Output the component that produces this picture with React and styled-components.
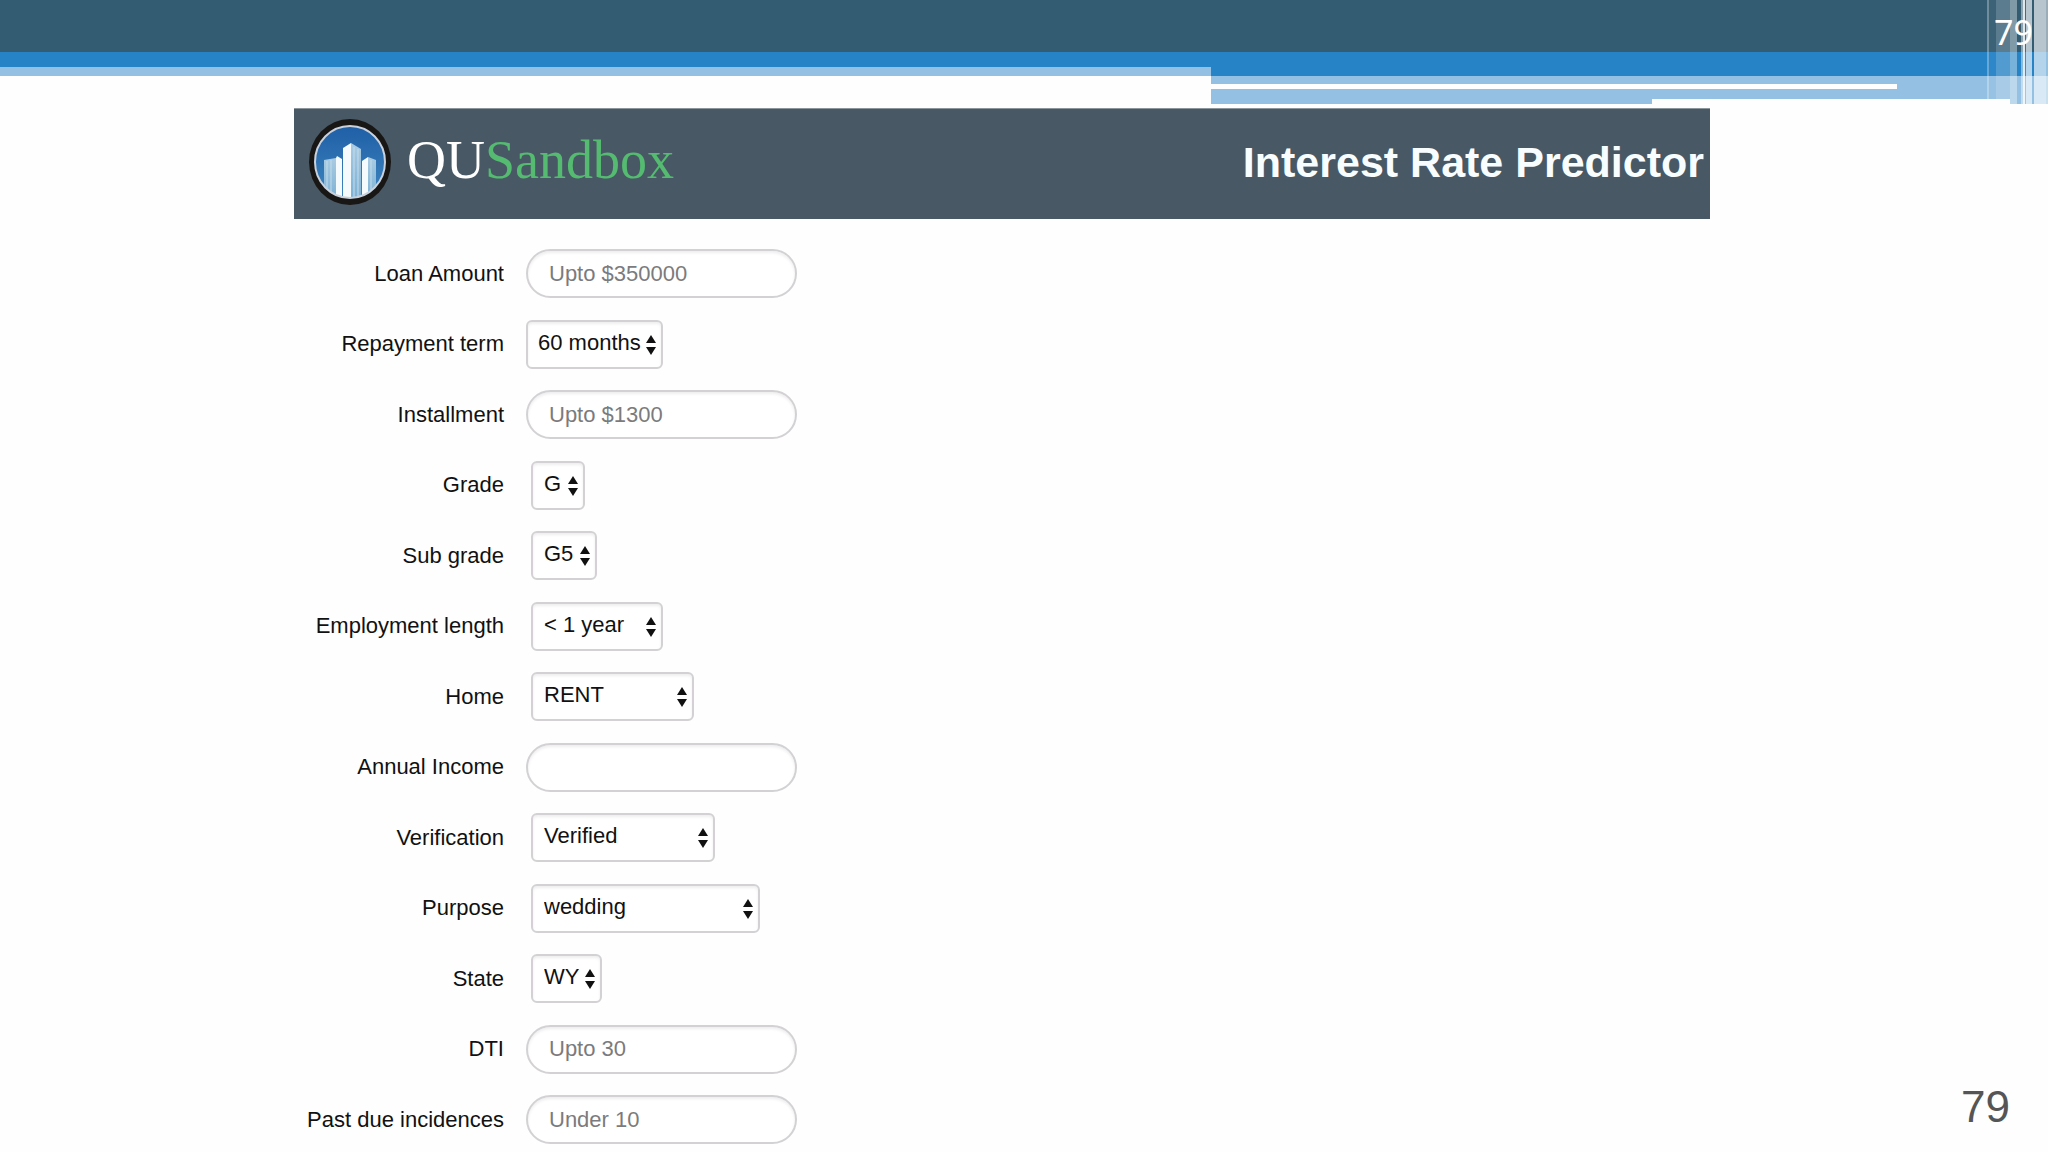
import { useId } from 'react';
import styled, { createGlobalStyle } from 'styled-components';

const GlobalStyle = createGlobalStyle`
    * {
        box-sizing: border-box;
    }

    body {
        margin: 0;
        background: #fefefe;
        color: #111;
        font-family: "Liberation Sans", Arial, sans-serif;
        font-size: 22px;
    }
`

const Slide = styled.div`
    min-height: 100vh;
    display: flex;
    flex-direction: column;
`

const Banner = styled.div`
    position: relative;
    height: 104px;
    margin-bottom: 4px;
    flex-shrink: 0;
`

const Band = styled.div`
    height: ${ props => props.$height }px;
    background: ${ props => props.$colour };
`

const Split = styled.div`
    display: flex;
    align-items: flex-start;
`

const SplitLeft = styled.div`
    flex: 1211 1 0;
`

const SplitRight = styled.div`
    flex: 837 1 0;
`

const Rule = styled.div`
    height: 5px;
    margin-right: 151px;
    background: #fefefe;
`

const LightBand = styled.div`
    background: #93c0e3;
`

const Steps = styled.div`
    display: flex;
    justify-content: space-between;
`

const Step = styled.div`
    width: ${ props => props.$width };
    height: 5px;
    background: #93c0e3;
`

const Stripes = styled.div`
    position: absolute;
    top: 0;
    right: 0;
    height: 104px;
    display: flex;
`

const Stripe = styled.div`
    width: ${ props => props.$width }px;
    height: ${ props => props.$short ? 99 : 104 }px;
    background: rgba(255, 255, 255, ${ props => props.$alpha });
`

const BannerNumber = styled.span`
    position: absolute;
    top: 9px;
    right: 15px;
    color: #fff;
    font-family: "Noto Sans", sans-serif;
    font-size: 34px;
    line-height: 46px;
`

const TitleBar = styled.header`
    height: 111px;
    margin: 0 338px 0 294px;
    padding: 0 6px 4px 14px;
    background: #485965;
    border-top: 1px solid #8b959c;
    display: flex;
    align-items: center;
    flex-shrink: 0;
`

const Brand = styled.div`
    display: flex;
    align-items: center;
    gap: 15px;
    color: #fff;
    font-family: "Liberation Serif", serif;
    font-size: 54px;
    line-height: 64px;
`

const BrandAccent = styled.span`
    color: #54bb70;
`

const BrandName = styled.span`
    padding-bottom: 4px;
`

const Title = styled.h1`
    margin: 0 0 0 auto;
    color: #f8fdff;
    font-size: 43px;
    line-height: 50px;
`

const Content = styled.div`
    flex: 1;
    display: flex;
    justify-content: space-between;
    padding: 30px 38px 8px 294px;
`

const Form = styled.form`
    display: grid;
    grid-template-columns: 210px auto;
    grid-auto-rows: 49px;
    align-content: space-between;
    align-items: center;
    column-gap: 22px;
    row-gap: 16px;
`

const Label = styled.label`
    text-align: right;
    line-height: 28px;
`

const Input = styled.input`
    width: 271px;
    height: 49px;
    padding: 0 21px;
    border: 2px solid #d3d1d4;
    border-radius: 25px;
    background: #fff;
    box-shadow: inset 0 2px 3px rgba(0, 0, 0, 0.07);
    color: #111;
    font: inherit;

    &::placeholder {
        color: #7b7b7d;
        opacity: 1;
    }
`

const SelectBox = styled.div`
    position: relative;
    width: ${ props => props.$width }px;
    margin-left: ${ props => props.$flush ? 0 : 5 }px;
`

const StyledSelect = styled.select`
    appearance: none;
    display: block;
    width: 100%;
    height: 49px;
    padding: 0 0 4px ${ props => props.$flush ? 10 : 11 }px;
    border: 2px solid #d3d1d4;
    border-radius: 6px;
    background: #fff;
    box-shadow: inset 0 2px 3px rgba(0, 0, 0, 0.07);
    color: #111;
    font: inherit;
`

const Arrows = styled.svg`
    position: absolute;
    top: 15px;
    right: 7px;
    pointer-events: none;
`

const PageNumber = styled.span`
    align-self: flex-end;
    margin-bottom: 12px;
    color: #555;
    font-size: 44px;
    line-height: 50px;
`

const stripes = [
    { width: 2, alpha: 0.3, short: true },
    { width: 7, alpha: 0.04, short: true },
    { width: 14, alpha: 0.2, short: true },
    { width: 7, alpha: 0.38 },
    { width: 4, alpha: 0 },
    { width: 2, alpha: 0.45 },
    { width: 2, alpha: 0.85 },
    { width: 1, alpha: 0.1 },
    { width: 6, alpha: 0.65 },
    { width: 2, alpha: 0 },
    { width: 12, alpha: 0.65 },
    { width: 2, alpha: 0.5 },
]

const fields = [
    { label: 'Loan Amount', placeholder: 'Upto $350000' },
    { label: 'Repayment term', value: '60 months', width: 137, flush: true },
    { label: 'Installment', placeholder: 'Upto $1300' },
    { label: 'Grade', value: 'G', width: 54 },
    { label: 'Sub grade', value: 'G5', width: 66 },
    { label: 'Employment length', value: '< 1 year', width: 132 },
    { label: 'Home', value: 'RENT', width: 163 },
    { label: 'Annual Income', placeholder: '' },
    { label: 'Verification', value: 'Verified', width: 184 },
    { label: 'Purpose', value: 'wedding', width: 229 },
    { label: 'State', value: 'WY', width: 71 },
    { label: 'DTI', placeholder: 'Upto 30' },
    { label: 'Past due incidences', placeholder: 'Under 10' },
]

const Logo = () => (
    <svg width="84" height="88" viewBox="0 0 84 88" aria-hidden="true">
        <defs>
            <clipPath id="disc"><ellipse cx="42" cy="44" rx="35" ry="36" /></clipPath>
            <linearGradient id="sky" x1="0" y1="0" x2="0" y2="1">
                <stop offset="0" stopColor="#1f5fa6" />
                <stop offset="1" stopColor="#3f86c0" />
            </linearGradient>
            <linearGradient id="face" x1="0" y1="0" x2="0" y2="1">
                <stop offset="0" stopColor="#a9cbe2" />
                <stop offset="1" stopColor="#79afd4" />
            </linearGradient>
        </defs>
        <ellipse cx="42" cy="44" rx="41" ry="43" fill="#191616" />
        <ellipse cx="42" cy="44" rx="35" ry="36" fill="url(#sky)" />
        <g clipPath="url(#disc)">
            <path d="M16 42l12-2v44H16z" fill="url(#face)" />
            <path d="M28 40l1-2 5 3v43h-6z" fill="#f5fafc" />
            <path d="M35 30l8-5v59h-8z" fill="#f5fafc" />
            <path d="M43 25l10 6v53H43z" fill="url(#face)" />
            <path d="M46 29v55M50 31v53" stroke="#c5dcea" strokeWidth="1" />
            <path d="M19 43v41M23 42v42" stroke="#c5dcea" strokeWidth="1" />
            <path d="M54 43l6-4v45h-6z" fill="#f5fafc" />
            <path d="M60 39l8 3v42h-8z" fill="url(#face)" />
            <path d="M63 42v42" stroke="#c5dcea" strokeWidth="1" />
        </g>
        <ellipse cx="42" cy="44" rx="35" ry="36" fill="none" stroke="#c9d2dc" strokeWidth="2" />
    </svg>
)

const Field = props => {
    const id = useId()

    return(
        <>
            <Label htmlFor={ id }>{ props.label }</Label>
            { props.value ? (
                <SelectBox $width={ props.width } $flush={ props.flush }>
                    <StyledSelect id={ id } defaultValue={ props.value } $flush={ props.flush }>
                        <option>{ props.value }</option>
                    </StyledSelect>
                    <Arrows width="10" height="20" viewBox="0 0 10 20">
                        <path d="M5 0l5 8H0zM5 20l5-8H0z" fill="#111" />
                    </Arrows>
                </SelectBox>
            ) : (
                <Input id={ id } type="text" placeholder={ props.placeholder } />
            ) }
        </>
    )
}

const SlideBanner = () => (
    <Banner>
        <Band $height={ 52 } $colour="#335c72" />
        <Band $height={ 15 } $colour="#2683c6" />
        <Split>
            <SplitLeft>
                <Band $height={ 9 } $colour="#93c0e3" />
            </SplitLeft>
            <SplitRight>
                <Band $height={ 9 } $colour="#2683c6" />
                <LightBand>
                    <Band $height={ 8 } $colour="#93c0e3" />
                    <Rule />
                    <Band $height={ 10 } $colour="#93c0e3" />
                </LightBand>
                <Steps>
                    <Step $width="441px" />
                    <Step $width="38px" />
                </Steps>
            </SplitRight>
        </Split>
        <Stripes>
            { stripes.map((stripe, i) => (
                <Stripe key={ i } $width={ stripe.width } $alpha={ stripe.alpha } $short={ stripe.short } />
            )) }
        </Stripes>
        <BannerNumber>79</BannerNumber>
    </Banner>
)

const App = () => {
    return(
        <Slide>
            <GlobalStyle />
            <SlideBanner />
            <TitleBar>
                <Brand>
                    <Logo />
                    <BrandName>QU<BrandAccent>Sandbox</BrandAccent></BrandName>
                </Brand>
                <Title>Interest Rate Predictor</Title>
            </TitleBar>
            <Content>
                <Form>
                    { fields.map(field => <Field key={ field.label } { ...field } />) }
                </Form>
                <PageNumber>79</PageNumber>
            </Content>
        </Slide>
    )
}

export default App
